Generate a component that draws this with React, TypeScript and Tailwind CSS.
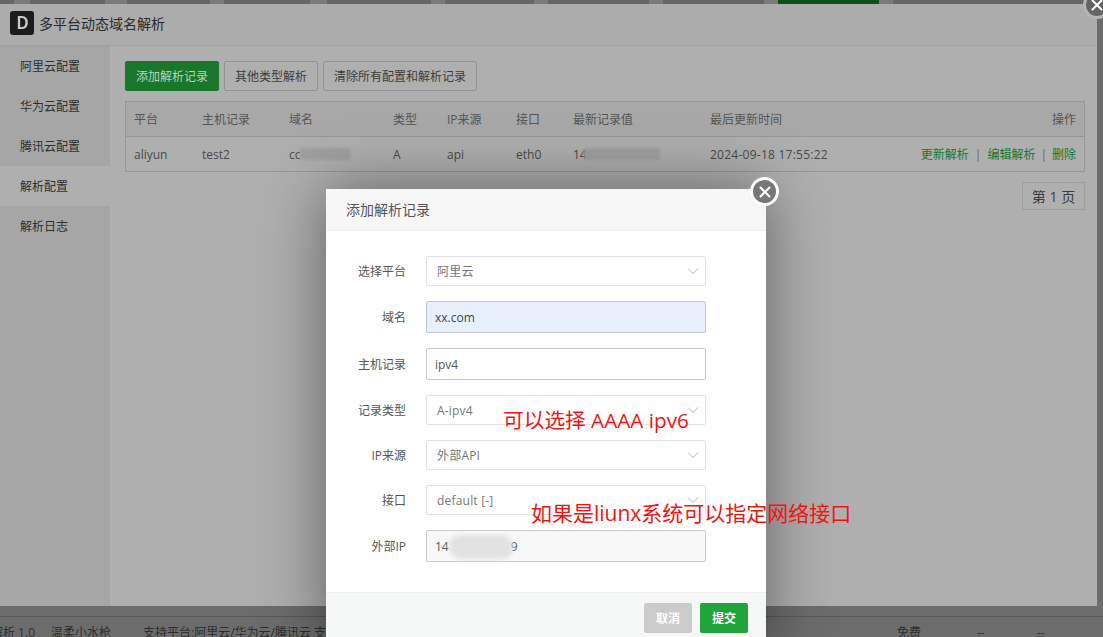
const font = "font-['Open_Sans','Noto_Sans_CJK_SC',sans-serif]";

const dark = "bg-[#666666]";
const light = "bg-[#7a7a7a]";

const topSegments = [
  { w: 14, c: dark },
  { w: 16, c: light },
  { w: 75, c: dark },
  { w: 22, c: light },
  { w: 83, c: dark },
  { w: 14, c: light },
  { w: 86, c: dark },
  { w: 17, c: light },
  { w: 104, c: dark },
  { w: 14, c: light },
  { w: 89, c: dark },
  { w: 14, c: light },
  { w: 101, c: dark },
  { w: 14, c: light },
  { w: 101, c: dark },
  { w: 14, c: light },
  { w: 101, c: "bg-[#0f4f1c]" },
  { w: 14, c: light },
  { w: 210, c: dark },
];

const sideItems = ["阿里云配置", "华为云配置", "腾讯云配置", "解析配置", "解析日志"];

const Chevron = () => (
  <svg width="12" height="7" viewBox="0 0 12 7" className="absolute right-[6px] top-1/2 -translate-y-1/2" fill="none">
    <polyline points="1,1 6,6 11,1" stroke="#b5b5b5" strokeWidth="1" />
  </svg>
);

const CloseX = ({ size = 12 }: { size?: number }) => (
  <svg width={size} height={size} viewBox="0 0 12 12" fill="none">
    <path d="M1.5 1.5 L10.5 10.5 M10.5 1.5 L1.5 10.5" stroke="#fff" strokeWidth="2" strokeLinecap="round" />
  </svg>
);

const Field = ({
  label,
  h,
  gap,
  children,
}: {
  label: string;
  h: string;
  gap: string;
  children: React.ReactNode;
}) => (
  <div className={`flex items-center ${h} ${gap}`}>
    <span className="w-[80px] pt-[2px] text-right text-[12px] text-[#555555]">{label}</span>
    <div className="ml-[20px] h-full w-[280px]">{children}</div>
  </div>
);

const SelectBox = ({ value }: { value: string }) => (
  <div className="relative flex h-full items-center rounded-[2px] border border-[#e2e2ea] bg-white pl-[10px] pt-[2px] text-[12px] tracking-[0.2px] text-[#777777]">
    {value}
    <Chevron />
  </div>
);

const App = () => (
  <div className={`relative h-[637px] w-[1103px] overflow-hidden bg-[#6c6c6c] ${font}`}>
    <div className="flex h-[4px]">
      {topSegments.map((s, i) => (
        <div key={i} className={`h-full ${s.c}`} style={{ width: s.w }} />
      ))}
    </div>

    {/* outer dialog */}
    <div className="flex h-[602px] w-[1097px] flex-col bg-[#afafaf]">
      <div className="flex h-[42px] shrink-0 items-center gap-[5px] border-b border-[#a2a2a2] bg-[#acacac] pb-[3px] pl-[10px]">
        <div className="flex h-[24px] w-[24px] items-center justify-center rounded-[3px] bg-[#1c1c1c] font-['Liberation_Sans',sans-serif] text-[18px] font-bold text-[#c8c8c8]">
          <span className="scale-x-90">D</span>
        </div>
        <span className="text-[14px] text-[#2a2a2a]">多平台动态域名解析</span>
      </div>

      <div className="flex min-h-0 flex-1">
        <div className="w-[110px] shrink-0 bg-[#a6a6a6]">
          {sideItems.map((t) => (
            <div
              key={t}
              className={`flex h-[40px] items-center pl-[20px] pt-[2px] text-[12px] text-[#2e2e2e] ${t === "解析配置" ? "bg-[#afafaf]" : ""}`}
            >
              {t}
            </div>
          ))}
        </div>

        <div className="flex-1 px-[15px] pt-[15px] text-[12px]">
          <div className="flex gap-[5px]">
            <div className="flex h-[30px] w-[94px] items-center justify-center rounded-[2px] bg-[#18772b] pt-[2px] text-[#b9d3bf]">
              添加解析记录
            </div>
            <div className="flex h-[30px] w-[94px] items-center justify-center rounded-[2px] border border-[#939393] pt-[2px] text-[#3c3c3c]">
              其他类型解析
            </div>
            <div className="flex h-[30px] w-[154px] items-center justify-center rounded-[2px] border border-[#939393] pt-[2px] text-[#3c3c3c]">
              清除所有配置和解析记录
            </div>
          </div>

          <div className="mt-[10px] w-[960px] border border-[#979797] text-[#4a4a4a]">
            <div className="grid h-[35px] grid-cols-[68px_87px_104px_54px_69px_57px_137px_1fr] items-center border-b border-[#979797] bg-[#a8a8a8] pl-[8px] pr-[8px] pt-[2px] text-[#555555]">
              <span>平台</span>
              <span>主机记录</span>
              <span>域名</span>
              <span>类型</span>
              <span>IP来源</span>
              <span>接口</span>
              <span>最新记录值</span>
              <div className="flex justify-between">
                <span>最后更新时间</span>
                <span>操作</span>
              </div>
            </div>
            <div className="relative grid h-[34px] grid-cols-[68px_87px_104px_54px_69px_57px_137px_1fr] items-center pl-[8px] pr-[8px] pt-[2px]">
              <span>aliyun</span>
              <span>test2</span>
              <span>cc</span>
              <span>A</span>
              <span>api</span>
              <span>eth0</span>
              <span>14</span>
              <div className="flex justify-between">
                <span className="tracking-[0.25px]">2024-09-18 17:55:22</span>
                <span className="text-[#18772b]">
                  更新解析<span className="mx-[6px] text-[#666666]">|</span>编辑解析
                  <span className="mx-[5px] text-[#666666]">|</span>删除
                </span>
              </div>
              <div className="absolute left-[174px] top-[11px] h-[12px] w-[50px] bg-[#a0a0a0] blur-[1px]" />
              <div className="absolute left-[458px] top-[11px] h-[12px] w-[76px] bg-[#a0a0a0] blur-[1px]" />
            </div>
          </div>

          <div className="mt-[10px] flex justify-end">
            <div className="flex h-[28px] w-[63px] items-center justify-center border border-[#a0a0a0] text-[14px] text-[#3c3c3c]">
              第 1 页
            </div>
          </div>
        </div>
      </div>
    </div>

    {/* list behind the dialog */}
    <div className="mt-[10px] border-t border-[#585858] bg-[#6c6c6c] pt-[7px] text-[12px] text-[#2c2c2c]">
      <div className="grid grid-cols-[51px_92px_754px_80px_60px_1fr] whitespace-nowrap">
        <span className="-ml-[9px]">解析 1.0</span>
        <span>温柔小水枪</span>
        <span>支持平台:阿里云/华为云/腾讯云 支持</span>
        <span>免费</span>
        <span>--</span>
        <span>--</span>
      </div>
    </div>

    <div className="absolute left-[1083px] top-[-9px] flex h-[28px] w-[28px] items-center justify-center rounded-full border-[3px] border-[#b5b5b5] bg-[#646464]">
      <CloseX />
    </div>

    {/* add record modal */}
    <div className="absolute left-[326px] top-[189px] w-[440px] bg-white shadow-[0_0_60px_rgba(0,0,0,0.45)]">
      <div className="flex h-[42px] items-center border-b border-[#eeeeee] bg-[#f7f7f7] pl-[20px] text-[14px] text-[#555555]">
        添加解析记录
      </div>
      <div className="pt-[25px]">
        <Field label="选择平台" h="h-[30px]" gap="mb-[15px]">
          <SelectBox value="阿里云" />
        </Field>
        <Field label="域名" h="h-[32px]" gap="mb-[15px]">
          <div className="flex h-full items-center rounded-[2px] border border-[#c4c8d0] bg-[#e8f0fe] pl-[8px] pt-[2px] text-[12px] text-[#444444]">
            xx.com
          </div>
        </Field>
        <Field label="主机记录" h="h-[32px]" gap="mb-[15px]">
          <div className="flex h-full items-center rounded-[2px] border border-[#cccccc] bg-white pl-[8px] pt-[2px] text-[12px] text-[#555555]">
            ipv4
          </div>
        </Field>
        <Field label="记录类型" h="h-[30px]" gap="mb-[15px]">
          <SelectBox value="A-ipv4" />
        </Field>
        <Field label="IP来源" h="h-[30px]" gap="mb-[15px]">
          <SelectBox value="外部API" />
        </Field>
        <Field label="接口" h="h-[30px]" gap="mb-[15px]">
          <SelectBox value="default [-]" />
        </Field>
        <Field label="外部IP" h="h-[32px]" gap="mb-[30px]">
          <div className="relative flex h-full items-center rounded-[2px] border border-[#cccccc] bg-[#f8f8f8] pl-[8px] pt-[2px] text-[12px] text-[#555555]">
            14<span className="ml-[62px]">9</span>
            <div className="absolute left-[22px] top-[4px] h-[24px] w-[64px] rounded-full bg-[#e2e2e2] blur-[2px]" />
          </div>
        </Field>
      </div>
      <div className="flex h-[60px] justify-end gap-[8px] border-t border-[#eeeeee] bg-[#f6f8f8] pr-[18px] pt-[10px] text-[12px] font-bold text-white">
        <div className="flex h-[30px] w-[48px] items-center justify-center rounded-[2px] bg-[#cbcbcb] pt-[2px]">取消</div>
        <div className="flex h-[30px] w-[48px] items-center justify-center rounded-[2px] bg-[#20a53a] pt-[2px]">提交</div>
      </div>
    </div>

    <div className="absolute left-[750px] top-[177px] flex h-[29px] w-[29px] items-center justify-center rounded-full border-[3px] border-white bg-[#777777]">
      <CloseX />
    </div>

    {/* annotations added over the screenshot */}
    <span className="absolute left-[503px] top-[406px] whitespace-nowrap text-[20.7px] leading-[28px] text-[#f5130f]">
      可以选择 AAAA ipv6
    </span>
    <span className="absolute left-[531px] top-[499px] whitespace-nowrap text-[21px] leading-[28px] text-[#f5130f]">
      如果是liunx系统可以指定网络接口
    </span>
  </div>
);

export default App;
